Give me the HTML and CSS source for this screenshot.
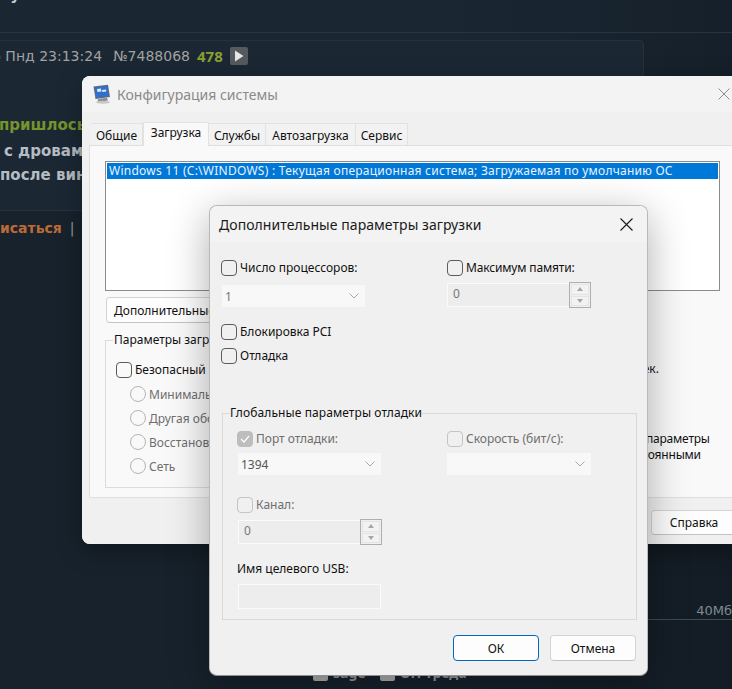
FILE: index.html
```html
<!DOCTYPE html>
<html lang="ru">
<head>
<meta charset="utf-8">
<title>Конфигурация системы</title>
<link rel="stylesheet" href="styles.css">
</head>
<body>
<div class="desk">
  <div class="thread">
    <div class="thread-title">ну:</div>
    <div class="thread-rule"></div>
    <div class="post">
      <div class="post-meta">6 Пнд 23:13:24 <span class="post-id">№7488068</span> <b class="post-num">478</b> <span class="post-play"><svg width="10" height="12" viewBox="0 0 10 12"><path d="M1 0.5 L9.5 6 L1 11.5 Z" fill="#e6e6e6"/></svg></span></div>
      <p class="post-green">пришлось перебирать</p>
      <p class="post-line one">с дровами</p>
      <p class="post-line two">после винды</p>
    </div>
    <p class="post-reply">исаться <span class="post-sep">|</span></p>
    <div class="file-row"><span class="file-size">40Мб</span></div>
    <div class="post-form">
      <span class="form-box"></span><span class="form-label">sage</span>
      <span class="form-box"></span><span class="form-label">ОП-треда</span>
    </div>
  </div>

  <section class="win main-win">
    <header class="main-title">
      <svg class="app-icon" width="20" height="20" viewBox="0 0 20 20">
        <path d="M1.5 2.5 L16 0.8 L18 13 L3.5 15 Z" fill="#5b6b86"/>
        <path d="M3 3.6 L15 2.3 L16.5 11.8 L4.6 13.4 Z" fill="#2f6fd0"/>
        <path d="M5 5 L9 4.5 L9.4 7.5 L5.4 8 Z M10 6 L14 5.5 L14.3 7.5 L10.3 8 Z" fill="#dfe9f8"/>
        <path d="M6 15 L15 13.8 L16 16.6 L5.5 18 Z" fill="#8a8f98"/>
        <ellipse cx="11" cy="18.2" rx="7" ry="1.5" fill="#c6c6c6"/>
      </svg>
      <span class="main-title-text">Конфигурация системы</span>
      <svg class="main-close" width="12" height="12" viewBox="0 0 12 12"><path d="M0.5 0.5 L11.5 11.5 M11.5 0.5 L0.5 11.5" stroke="#8d8d8d" stroke-width="1" fill="none"/></svg>
    </header>
    <nav class="tabs">
      <span class="tab t1">Общие</span>
      <span class="tab active t2">Загрузка</span>
      <span class="tab t3">Службы</span>
      <span class="tab t4">Автозагрузка</span>
      <span class="tab t5">Сервис</span>
    </nav>
    <div class="tab-page">
      <div class="os-list"><div class="os-item">Windows 11 (C:\WINDOWS) : Текущая операционная система; Загружаемая по умолчанию ОС</div></div>
      <button class="btn more-btn" type="button">Дополнительные параметры...</button>
      <div class="boot-row">
        <fieldset class="boot-group">
          <legend>Параметры загрузки</legend>
          <label class="check-row"><span class="cb"></span>Безопасный режим</label>
          <div class="radios">
            <div class="radio-row"><span class="radio"></span>Минимальная</div>
            <div class="radio-row"><span class="radio"></span>Другая оболочка</div>
            <div class="radio-row"><span class="radio"></span>Восстановление AD</div>
            <div class="radio-row"><span class="radio"></span>Сеть</div>
          </div>
        </fieldset>
        <div class="boot-side">
          <div class="timeout">30 сек.</div>
          <div class="persist">
            <div>Сделать эти параметры</div>
            <div class="persist-second">загрузки постоянными</div>
          </div>
        </div>
      </div>
    </div>
    <footer class="main-foot"><button class="btn help-btn" type="button">Справка</button></footer>
  </section>

  <section class="win dlg">
    <header class="dlg-title">
      <span>Дополнительные параметры загрузки</span>
      <svg width="13" height="13" viewBox="0 0 13 13"><path d="M0.5 0.5 L12.5 12.5 M12.5 0.5 L0.5 12.5" stroke="#1a1a1a" stroke-width="1.1" fill="none"/></svg>
    </header>
    <div class="dlg-body">
      <div class="opts">
        <div class="opts-col">
          <label class="check-row"><span class="cb"></span>Число процессоров:</label>
          <div class="select cpu-select"><span>1</span><svg class="chev" width="10" height="6" viewBox="0 0 10 6"><path d="M0.5 0.5 L5 5 L9.5 0.5" stroke="#a8a8a8" fill="none"/></svg></div>
          <label class="check-row pci-row"><span class="cb"></span>Блокировка PCI</label>
          <label class="check-row debug-row"><span class="cb"></span>Отладка</label>
        </div>
        <div class="opts-col">
          <label class="check-row mem-label"><span class="cb"></span>Максимум памяти:</label>
          <div class="spin mem-spin">
            <span class="spin-field">0</span>
            <span class="spin-btns"><span class="spin-up"></span><span class="spin-down"></span></span>
          </div>
        </div>
      </div>
      <fieldset class="debug-group">
        <legend>Глобальные параметры отладки</legend>
        <div class="debug-grid">
          <div>
            <label class="check-row off"><span class="cb on"><svg width="10" height="8" viewBox="0 0 10 8"><path d="M1 4 L4 7 L9 1" stroke="#fff" stroke-width="1.2" fill="none"/></svg></span>Порт отладки:</label>
            <div class="select port-select"><span>1394</span><svg class="chev" width="10" height="6" viewBox="0 0 10 6"><path d="M0.5 0.5 L5 5 L9.5 0.5" stroke="#a8a8a8" fill="none"/></svg></div>
          </div>
          <div>
            <label class="check-row off"><span class="cb light"></span>Скорость (бит/с):</label>
            <div class="select speed-select"><span></span><svg class="chev" width="10" height="6" viewBox="0 0 10 6"><path d="M0.5 0.5 L5 5 L9.5 0.5" stroke="#a8a8a8" fill="none"/></svg></div>
          </div>
        </div>
        <label class="check-row off channel-row"><span class="cb light"></span>Канал:</label>
        <div class="spin channel-spin">
          <span class="spin-field">0</span>
          <span class="spin-btns"><span class="spin-up"></span><span class="spin-down"></span></span>
        </div>
        <div class="usb-label">Имя целевого USB:</div>
        <div class="usb-input"></div>
      </fieldset>
      <div class="dlg-actions">
        <button class="btn primary" type="button">ОК</button>
        <button class="btn" type="button">Отмена</button>
      </div>
    </div>
  </section>
</div>
</body>
</html>
```
FILE: styles.css
```css
* { box-sizing: border-box; }
html, body { margin: 0; padding: 0; width: 732px; height: 689px; overflow: hidden; }
body { font-family: "Noto Sans", "Open Sans", sans-serif; font-size: 12px; color: #111; }
.desk { position: relative; width: 732px; height: 689px; overflow: hidden; background: linear-gradient(90deg, rgba(10,15,20,0) 60%, rgba(10,15,20,.3) 100%), linear-gradient(180deg, #1a2733 0, #1a2733 210px, #17222c 211px); }

.thread { height: 689px; display: flex; flex-direction: column; font-family: "DejaVu Sans", sans-serif; }
.thread-title { height: 32px; margin-top: -15px; padding-left: 0; font-size: 15px; font-weight: 700; color: #c9c9c9; line-height: 20px; flex: none; }
.thread-rule { height: 1px; margin-top: 15px; background: #27353f; flex: none; }
.post { height: 171px; width: 660px; margin: 7px 0 0 -16px; padding: 5px 0 0 0; border: 1px solid #233240; border-radius: 4px; background: #1b2834; flex: none; }
.post-meta { font-size: 14px; line-height: 20px; color: #a2a2a2; padding-left: 7px; white-space: nowrap; display: flex; align-items: center; gap: 7px; }
.post-id { margin-left: 4px; }
.post-num { color: #8ba032; font-family: "Noto Sans", sans-serif; font-size: 15px; font-weight: 700; }
.post-play { width: 18px; height: 18px; border-radius: 2px; background: #565a5e; display: inline-flex; align-items: center; justify-content: center; }
.post-green { margin: 47px 0 0 14px; font-size: 15px; font-weight: 700; line-height: 24px; color: #76932c; white-space: nowrap; }
.post-line { margin: 0; font-size: 15px; font-weight: 700; line-height: 24px; color: #b5bcc2; white-space: nowrap; }
.post-line.one { margin-top: 2px; padding-left: 19px; }
.post-line.two { padding-left: 15px; }
.post-reply { margin: 7px 0 0 0; padding-left: 0; font-size: 14px; font-weight: 700; line-height: 20px; color: #bd6a39; white-space: nowrap; }
.post-sep { color: #9a9a9a; font-weight: 400; margin-left: 3px; }
.file-row { position: absolute; left: 648px; right: 0; top: 602px; height: 18px; border-bottom: 1px solid #3c4a55; text-align: right; }
.file-size { font-size: 13px; line-height: 18px; color: #7f8a92; white-space: nowrap; }
.post-form { position: absolute; left: 313px; top: 663px; display: flex; align-items: center; font-family: "Noto Sans", sans-serif; font-size: 14px; font-weight: 700; color: #9a9a9a; line-height: 20px; }
.form-box { width: 15px; height: 15px; border-radius: 2px; background: #b0b0b0; margin-right: 5px; }
.form-label { margin-right: 14px; }

.win { position: absolute; overflow: hidden; border-radius: 8px; }
.main-win { left: 82px; top: 76px; width: 662px; height: 468px; background: #f0f0f0; box-shadow: 0 6px 24px rgba(0,0,0,.35); display: flex; flex-direction: column; }
.main-title { height: 36px; flex: none; display: flex; align-items: center; padding: 0 14px 0 10px; background: #f3f3f3; }
.app-icon { flex: none; }
.main-title-text { margin-left: 5px; flex: 1; font-size: 14px; color: #8a8a8a; }
.tabs { height: 33px; flex: none; display: flex; align-items: flex-end; padding-left: 9px; background: #f0f0f0; }
.tab { height: 22px; padding-top: 2px; border: 1px solid #e2e2e2; border-bottom: 0; border-left: 0; text-align: center; line-height: 20px; color: #111; background: #f2f2f2; }
.tab.active { height: 24px; background: #f9f9f9; border-left: 1px solid #e2e2e2; color: #111; position: relative; top: 1px; padding-top: 0; }
.t1 { width: 52px; } .t2 { width: 66px; } .t3 { width: 57px; } .t4 { width: 90px; } .t5 { width: 52px; }
.tab-page { height: 353px; flex: none; margin: 0 8px 0 7px; padding: 15px 15px 0; background: #f9f9f9; border: 1px solid #dfdfdf; }
.os-list { height: 130px; padding: 1px; border: 1px solid #8b8b8b; background: #fff; }
.os-item { height: 16px; line-height: 16px; padding-left: 2px; background: #0078d7; color: #e8f3ff; white-space: nowrap; overflow: hidden; letter-spacing: .25px; }
.btn { height: 26px; width: 86px; padding: 0; font: inherit; color: #111; border: 1px solid #d4d4d4; border-bottom-color: #c4c4c4; border-radius: 4px; background: #fdfdfd; }
.more-btn { display: block; width: 180px; margin: 6px 0 0 1px; text-align: left; padding-left: 7px; white-space: nowrap; overflow: hidden; }
.boot-row { display: flex; margin-top: 9px; }
.boot-group { width: 450px; height: 156px; margin: 0; padding: 0 0 0 10px; border: 1px solid #dcdcdc; }
.boot-group legend { padding: 0 1px; margin-left: -3px; line-height: 16px; color: #111; }
.check-row { display: flex; align-items: center; height: 16px; line-height: 16px; white-space: nowrap; color: #111; }
.boot-group .check-row { margin-top: 14px; }
.cb { flex: none; width: 16px; height: 16px; margin-right: 3px; border: 1px solid #5c5c5c; border-radius: 4px; display: flex; align-items: center; justify-content: center; }
.cb.on { background: #bdbdbd; border-color: #bdbdbd; }
.cb.light { border-color: #c4c4c4; }
.off { color: #6e6e6e; }
.radios { padding: 8px 0 0 14px; display: flex; flex-direction: column; gap: 8px; color: #6e6e6e; }
.radio-row { display: flex; align-items: center; height: 16px; white-space: nowrap; }
.radio { width: 16px; height: 16px; margin-right: 3px; border: 1px solid #b4b4b4; border-radius: 50%; flex: none; }
.boot-side { margin-left: 21px; padding-top: 29px; white-space: nowrap; }
.timeout { padding-left: 44px; line-height: 16px; }
.persist { margin-top: 54px; line-height: 16px; letter-spacing: -.2px; }
.persist-second { margin-left: -5px; }
.main-foot { flex: 1; display: flex; justify-content: flex-end; padding: 12px 7px 0 0; background: #f0f0f0; }
.help-btn { height: 25px; }

.dlg { left: 209px; top: 205px; width: 439px; height: 471px; background: #f0f0f0; border: 1px solid #b9b9b9; border-bottom-color: #8f8f8f; overflow: hidden; box-shadow: 0 10px 40px rgba(0,0,0,.32); }
.dlg-title { height: 36px; display: flex; align-items: center; justify-content: space-between; padding: 0 14px 0 9px; background: #f3f3f3; font-size: 14px; letter-spacing: .06px; color: #1a1a1a; }
.dlg-body { padding: 18px 11px 0 11px; }
.opts { display: grid; grid-template-columns: 226px 1fr; height: 145px; }
.select { height: 22px; display: flex; align-items: center; justify-content: space-between; padding: 0 6px 0 3px; background: #f8f8f8; color: #777; }
.cpu-select { width: 143px; margin: 9px 0 0 1px; padding-left: 3px; }
.pci-row { margin-top: 17px; }
.debug-row { margin-top: 8px; }
.mem-label { letter-spacing: -.15px; }
.spin { display: flex; align-items: stretch; color: #777; }
.spin-field { flex: 1; border: 1px solid #fafafa; border-right: 0; padding-left: 5px; line-height: 20px; background: #ededed; }
.spin-btns { width: 22px; border: 1px solid #aeaeae; display: flex; flex-direction: column; padding: 1px; gap: 1px; margin: -1px 0; }
.spin-up, .spin-down { flex: 1; background: #f2f2f2; border: 1px solid #e4e4e4; display: flex; align-items: center; justify-content: center; }
.spin-up::after { content: ""; border: 3.5px solid transparent; border-top: 0; border-bottom: 4px solid #a6a6a6; }
.spin-down::after { content: ""; border: 3.5px solid transparent; border-bottom: 0; border-top: 4px solid #a6a6a6; }
.mem-spin { width: 144px; height: 24px; margin: 7px 0 0 0; }
.debug-group { width: 415px; height: 215px; margin: 0 0 0 1px; padding: 10px 14px 0 14px; border: 1px solid #d9d9d9; min-width: 0; }
.debug-group legend { padding: 0; margin-left: -7px; line-height: 16px; letter-spacing: .1px; color: #111; }
.debug-grid { display: grid; grid-template-columns: 210px 1fr; }
.debug-grid .select { margin-top: 6px; width: 144px; color: #555; }
.debug-grid .port-select { margin-left: 1px; width: 143px; }
.channel-row { margin-top: 22px; }
.channel-spin { width: 144px; height: 24px; margin: 7px 0 0 1px; }
.usb-label { margin-top: 17px; line-height: 16px; color: #111; }
.usb-input { width: 143px; height: 25px; margin: 7px 0 0 1px; border: 1px solid #fafafa; background: #ededed; }
.dlg-actions { display: flex; justify-content: flex-end; gap: 11px; margin-top: 15px; }
.btn.primary { border: 1px solid #0067c0; }
```
